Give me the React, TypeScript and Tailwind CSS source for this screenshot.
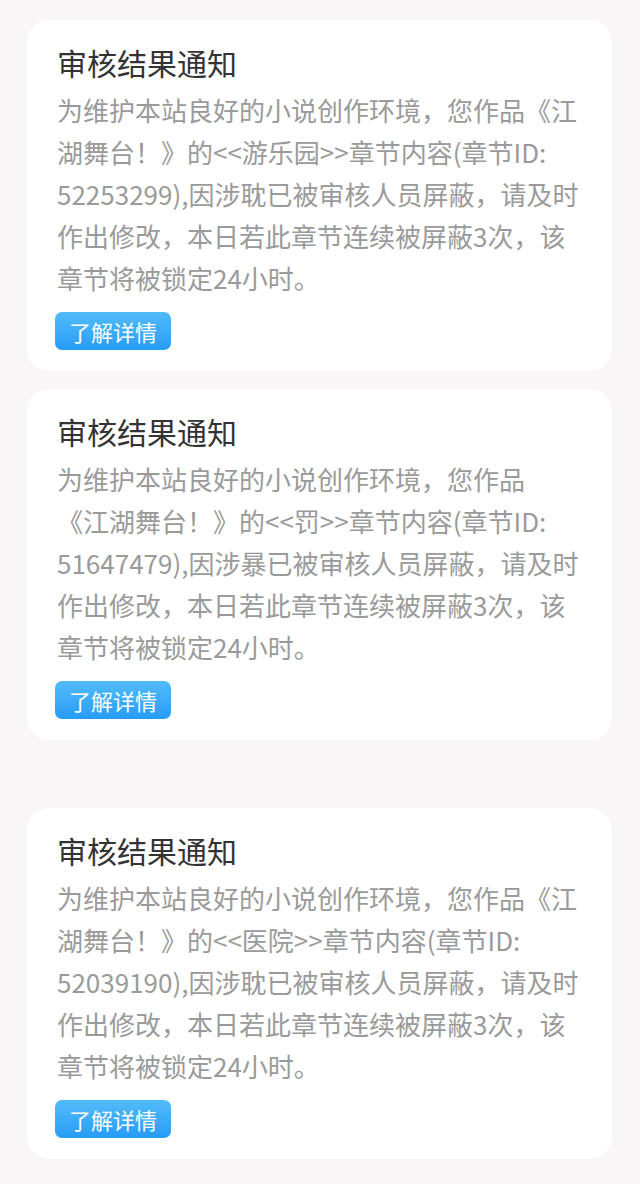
const notices = [
  {
    lines: [
      "为维护本站良好的小说创作环境，您作品《江",
      "湖舞台！》的<<游乐园>>章节内容(章节ID:",
      "52253299),因涉耽已被审核人员屏蔽，请及时",
      "作出修改，本日若此章节连续被屏蔽3次，该",
      "章节将被锁定24小时。",
    ],
    gap: "",
  },
  {
    lines: [
      "为维护本站良好的小说创作环境，您作品",
      "《江湖舞台！》的<<罚>>章节内容(章节ID:",
      "51647479),因涉暴已被审核人员屏蔽，请及时",
      "作出修改，本日若此章节连续被屏蔽3次，该",
      "章节将被锁定24小时。",
    ],
    gap: "mt-[18px]",
  },
  {
    lines: [
      "为维护本站良好的小说创作环境，您作品《江",
      "湖舞台！》的<<医院>>章节内容(章节ID:",
      "52039190),因涉耽已被审核人员屏蔽，请及时",
      "作出修改，本日若此章节连续被屏蔽3次，该",
      "章节将被锁定24小时。",
    ],
    gap: "mt-[68px]",
  },
];

function NoticeCard({ lines, gap }: { lines: string[]; gap: string }) {
  return (
    <div className={`${gap} mx-[27px] w-[585px] rounded-[22px] bg-white px-[30px] pt-[22px] pb-[21px]`}>
      <h2 className="text-[30px] leading-[40px] text-[#333333] font-normal">审核结果通知</h2>
      <p className="mt-[7px] text-[26px] leading-[42px] text-[#9a9a9a] whitespace-nowrap">
        {lines.map((l, i) => (
          <span key={i} className="block">
            {l}
          </span>
        ))}
      </p>
      <button className="mt-[13px] -ml-[2px] h-[38px] w-[116px] rounded-[7px] bg-gradient-to-b from-[#52bbf9] to-[#269cf6] text-[22px] leading-[38px] text-white">
        了解详情
      </button>
    </div>
  );
}

export default function App() {
  return (
    <div
      className="flex min-h-[1184px] w-[640px] flex-col bg-[#f8f6f6] pt-[20px] pb-[24px]"
      style={{ fontFamily: '"Noto Sans CJK SC", "Noto Sans", sans-serif' }}
    >
      {notices.map((n, i) => (
        <NoticeCard key={i} lines={n.lines} gap={n.gap} />
      ))}
    </div>
  );
}
